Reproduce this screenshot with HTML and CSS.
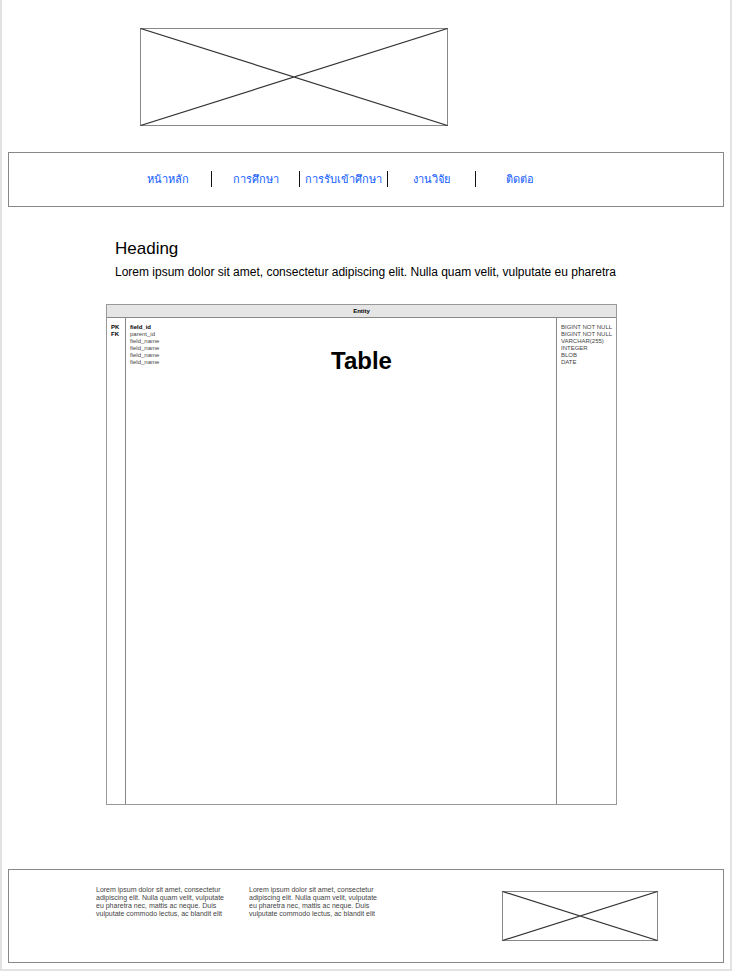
FILE: index.html
```html
<!DOCTYPE html>
<html lang="th">
<head>
<meta charset="utf-8">
<meta name="viewport" content="width=device-width, initial-scale=1">
<title>Heading</title>
<link rel="stylesheet" href="styles.css">
</head>
<body>
<div class="page">
  <header class="banner">
    <svg class="placeholder" viewBox="0 0 308 98" aria-hidden="true">
      <rect x="0.5" y="0.5" width="307" height="97"/>
      <path d="M0.5 0.5 307.5 97.5M0.5 97.5 307.5 0.5"/>
    </svg>
  </header>
  <nav class="panel nav">
    <ul class="nav-list">
      <li><a href="#home">หน้าหลัก</a></li>
      <li><a href="#education">การศึกษา</a></li>
      <li><a href="#admission">การรับเข้าศึกษา</a></li>
      <li><a href="#research">งานวิจัย</a></li>
      <li><a href="#contact">ติดต่อ</a></li>
    </ul>
  </nav>
  <main class="main">
    <div class="intro">
      <h1>Heading</h1>
      <p>Lorem ipsum dolor sit amet, consectetur adipiscing elit. Nulla quam velit, vulputate eu pharetra</p>
    </div>
    <div class="entity-wrap">
      <table class="entity">
        <colgroup><col class="col-key"><col><col class="col-type"></colgroup>
        <thead><tr><th colspan="3">Entity</th></tr></thead>
        <tbody>
          <tr class="key"><td>PK</td><td>field_id</td><td>BIGINT NOT NULL</td></tr>
          <tr><td>FK</td><td>parent_id</td><td>BIGINT NOT NULL</td></tr>
          <tr><td></td><td>field_name</td><td>VARCHAR(255)</td></tr>
          <tr><td></td><td>field_name</td><td>INTEGER</td></tr>
          <tr><td></td><td>field_name</td><td>BLOB</td></tr>
          <tr class="last"><td></td><td>field_name</td><td>DATE</td></tr>
        </tbody>
      </table>
      <h2 class="entity-title">Table</h2>
    </div>
  </main>
  <footer class="panel footer">
    <p>Lorem ipsum dolor sit amet, consectetur adipiscing elit. Nulla quam velit, vulputate eu pharetra nec, mattis ac neque. Duis vulputate commodo lectus, ac blandit elit</p>
    <p>Lorem ipsum dolor sit amet, consectetur adipiscing elit. Nulla quam velit, vulputate eu pharetra nec, mattis ac neque. Duis vulputate commodo lectus, ac blandit elit</p>
    <svg class="placeholder" viewBox="0 0 156 50" aria-hidden="true">
      <rect x="0.5" y="0.5" width="155" height="49"/>
      <path d="M0.5 0.5 155.5 49.5M0.5 49.5 155.5 0.5"/>
    </svg>
  </footer>
</div>
</body>
</html>
```
FILE: styles.css
```css
* {
  box-sizing: border-box;
}

body,
h1,
h2,
p,
ul {
  margin: 0;
  padding: 0;
}

body {
  background: #fff;
  color: #000;
  font-family: "Liberation Sans", Arial, sans-serif;
}

.page {
  padding: 28px 6px 6px;
  border: 2px solid #e2e2e2;
  border-top: 0;
}

.placeholder {
  display: block;
  fill: none;
  stroke: #333;
  stroke-width: 1.2;
}

.placeholder rect {
  stroke: #888;
  stroke-width: 1;
}

.banner {
  padding-left: 132px;
}

.banner .placeholder {
  width: 308px;
}

.panel {
  border: 1px solid #888;
}

.nav {
  margin-top: 26px;
  padding: 18px 0 19px 115px;
}

.nav-list {
  display: grid;
  grid-template-columns: repeat(5, 88px);
  list-style: none;
}

.nav-list li {
  height: 16px;
  border-right: 1px solid #111;
  font-size: 11px;
  line-height: 16px;
  text-align: center;
  white-space: nowrap;
}

.nav-list li:last-child {
  border-right: 0;
}

.nav a {
  color: #0f5bff;
  text-decoration: none;
}

.main {
  padding: 32px 107px 0 98px;
}

.intro {
  padding-left: 9px;
}

h1 {
  font-size: 17px;
  font-weight: 400;
  line-height: 20px;
}

.intro p {
  margin-top: 5px;
  font-size: 12px;
  line-height: 16px;
}

.entity-wrap {
  position: relative;
  margin-top: 24px;
}

.entity {
  width: 100%;
  table-layout: fixed;
  border-collapse: separate;
  border-spacing: 0;
  border: 1px solid #999;
  font-size: 6px;
  line-height: 7px;
}

.col-key {
  width: 18px;
}

.col-type {
  width: 60px;
}

.entity th {
  height: 13px;
  padding: 0;
  border-bottom: 1px solid #888;
  background: #e5e5e5;
}

.entity td {
  padding: 0 4px;
  color: #444;
  vertical-align: top;
  white-space: nowrap;
}

.entity td:first-child {
  color: #000;
  font-weight: 700;
}

.entity td + td {
  border-left: 1px solid #888;
}

.entity .key td {
  padding-top: 6px;
}

.entity .key td:nth-child(2) {
  color: #000;
  font-weight: 700;
}

.entity .last td {
  height: 445px;
}

.entity-title {
  position: absolute;
  top: 43px;
  left: 0;
  right: 0;
  font-size: 24px;
  line-height: 28px;
  text-align: center;
}

.footer {
  display: flex;
  align-items: flex-start;
  gap: 24px;
  min-height: 94px;
  margin-top: 64px;
  padding: 16px 65px 0 87px;
}

.footer p {
  width: 129px;
  color: #444;
  font-size: 7px;
  line-height: 8px;
}

.footer .placeholder {
  width: 156px;
  margin-top: 5px;
  margin-left: auto;
}
```
